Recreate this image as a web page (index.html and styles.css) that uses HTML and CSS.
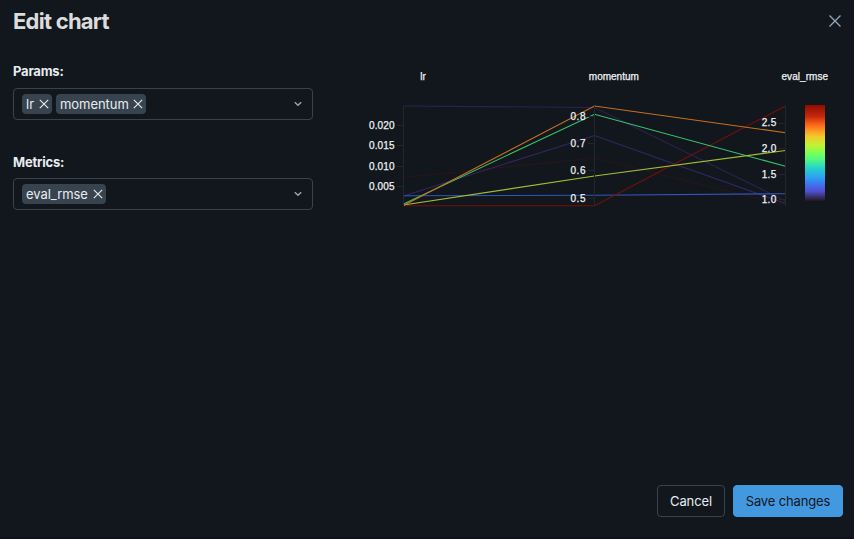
FILE: index.html
```html
<!DOCTYPE html>
<html lang="en">
<head>
<meta charset="utf-8">
<title>Edit chart</title>
<link rel="stylesheet" href="styles.css">
</head>
<body>
<div class="modal">
  <header class="header">
    <h1 class="title">Edit chart</h1>
    <svg class="close" viewBox="0 0 14 14"><path d="M1.5 1.5l11 11M12.5 1.5l-11 11"/></svg>
  </header>
  <main class="content">
    <form class="fields">
      <div class="field">
        <div class="label params-label">Params:</div>
        <div class="select">
          <span class="tag tag-lr"><span>lr</span><svg class="remove" viewBox="0 0 10 10"><path d="M.8.8l8.4 8.4M9.2.8L.8 9.2"/></svg></span>
          <span class="tag tag-momentum"><span>momentum</span><svg class="remove" viewBox="0 0 10 10"><path d="M.8.8l8.4 8.4M9.2.8L.8 9.2"/></svg></span>
          <svg class="chevron" viewBox="0 0 8 6"><path d="M.8 1.2L4 4.3l3.200-3.100"/></svg>
        </div>
      </div>
      <div class="field">
        <div class="label metrics-label">Metrics:</div>
        <div class="select">
          <span class="tag tag-rmse"><span>eval_rmse</span><svg class="remove" viewBox="0 0 10 10"><path d="M.8.8l8.4 8.4M9.2.8L.8 9.2"/></svg></span>
          <svg class="chevron" viewBox="0 0 8 6"><path d="M.8 1.2L4 4.3l3.200-3.100"/></svg>
        </div>
      </div>
    </form>
    <svg class="chart" viewBox="350 60 504 160">
      <defs>
        <linearGradient id="turbo" x1="0" y1="1" x2="0" y2="0">
          <stop offset="0" stop-color="#23171b"/>
          <stop offset=".05" stop-color="#3c3276"/>
          <stop offset=".1" stop-color="#4a52cc"/>
          <stop offset=".14" stop-color="#4860e6"/>
          <stop offset=".24" stop-color="#2f9df5"/>
          <stop offset=".34" stop-color="#26d0cd"/>
          <stop offset=".43" stop-color="#4df884"/>
          <stop offset=".5" stop-color="#7dff56"/>
          <stop offset=".58" stop-color="#c1f334"/>
          <stop offset=".67" stop-color="#f1cb2c"/>
          <stop offset=".73" stop-color="#ff9b21"/>
          <stop offset=".8" stop-color="#fb6218"/>
          <stop offset=".88" stop-color="#c4290c"/>
          <stop offset="1" stop-color="#900c00"/>
        </linearGradient>
      </defs>
      <g class="lines">
        <path stroke="#2b1518" d="M403.500 177.500L594.500 158L785.500 205.500"/>
        <path stroke="#2e2150" d="M403.500 106L594.500 107.500L785.500 201"/>
        <path stroke="#35265f" d="M403.500 196L594.500 135.500L785.500 203.500"/>
        <path stroke="#3454b8" d="M403.500 195.700L594.500 195.300L785.500 193.700"/>
        <path stroke="#751009" d="M403.500 205.800H594.500L785.500 106"/>
        <path stroke="#3bc46d" d="M403.500 204L594.500 114.300L785.500 166.300"/>
        <path stroke="#a5bd35" d="M403.500 205L594.500 176L785.500 150.500"/>
        <path stroke="#ca701c" d="M403.500 205.500L594.500 106L785.500 132.700"/>
      </g>
      <path class="axes" d="M403.500 105.500V206M397 125.500h6M397 145.500h6M397 166.500h6M397 186.500h6M594.500 106V206M588 116.500h6M588 143.500h6M588 170.500h6M588 198.500h6M785.500 106V206M779 123.500h6M779 148.500h6M779 174.500h6M779 199.500h6"/>
      <g class="ticks">
        <text x="369" y="129.300" textLength="25.500">0.020</text>
        <text x="369" y="149.300" textLength="25.500">0.015</text>
        <text x="369" y="169.500" textLength="25.500">0.010</text>
        <text x="369" y="190.300" textLength="25.500">0.005</text>
        <text x="570.500" y="120.300" textLength="15">0.8</text>
        <text x="570.500" y="147.300" textLength="15">0.7</text>
        <text x="570.500" y="174.300" textLength="15">0.6</text>
        <text x="570.500" y="202.300" textLength="15">0.5</text>
        <text x="761.700" y="126.300" textLength="14.500">2.5</text>
        <text x="761.700" y="152.300" textLength="14.500">2.0</text>
        <text x="761.700" y="178.300" textLength="14.500">1.5</text>
        <text x="761.700" y="203.300" textLength="14.500">1.0</text>
      </g>
      <g class="names">
        <text x="420.200" y="80">lr</text>
        <text x="588.800" y="80" textLength="50">momentum</text>
        <text x="781.500" y="80" textLength="46.500">eval_rmse</text>
      </g>
      <rect x="805" y="105" width="20" height="96" fill="url(#turbo)"/>
    </svg>
  </main>
  <footer class="footer">
    <button class="button cancel">Cancel</button>
    <button class="button save">Save changes</button>
  </footer>
</div>
</body>
</html>
```
FILE: styles.css
```css
* { box-sizing: border-box; }
body {
  margin: 0;
  background: #11171d;
  color: #e8ecf0;
  font: 13px/20px Inter, "Liberation Sans", sans-serif;
}
.modal {
  display: flex;
  flex-direction: column;
  width: 854px;
  height: 539px;
  padding-bottom: 20px;
  border-bottom: 2px solid #0d1116;
}
.header {
  display: flex;
  justify-content: space-between;
  height: 60px;
  padding: 7px 12px 0 13px;
}
.title {
  margin: 0;
  color: #dcdcdc;
  font-size: 22px;
  line-height: 28px;
  font-weight: 650;
  letter-spacing: -0.75px;
}
.close {
  width: 14px;
  height: 14px;
  margin-top: 7px;
  fill: none;
  stroke: #92a4b3;
  stroke-width: 1.4;
}
.content {
  display: grid;
  grid-template-columns: 300px 504px;
  column-gap: 37px;
  padding-left: 13px;
  flex: 1;
  align-items: start;
}
.fields { display: grid; gap: 32px; padding-top: 2px; }
.field { height: 58px; }
.label { height: 26px; font-weight: 700; }
.params-label { line-height: 19px; letter-spacing: -0.2px; }
.metrics-label { letter-spacing: -0.2px; }
.select {
  display: flex;
  align-items: center;
  gap: 4px;
  height: 32px;
  padding: 0 10px 0 8px;
  border: 1px solid #37444f;
  border-radius: 4px;
}
.tag {
  display: flex;
  align-items: center;
  justify-content: space-between;
  height: 20px;
  padding: 0 3px 0 4px;
  border-radius: 4px;
  background: #37444f;
  white-space: nowrap;
}
.tag-lr { width: 30px; }
.tag-momentum { width: 90px; letter-spacing: -0.05px; }
.tag-rmse { width: 84px; letter-spacing: -0.05px; }
.remove {
  width: 10px;
  height: 10px;
  flex: none;
  fill: none;
  stroke: #e8ecf0;
  stroke-width: 1.1;
}
.chevron {
  width: 8px;
  height: 6px;
  margin-left: auto;
  fill: none;
  stroke: #92a4b3;
  stroke-width: 1.5;
}
.chart { width: 504px; height: 160px; }
.lines { fill: none; stroke-width: 1.1; }
.axes { fill: none; stroke: #24272a; }
.ticks, .names {
  fill: #f0f2f4;
  font: 10px "Liberation Sans", sans-serif;
  stroke: #f0f2f4;
  stroke-width: 0.25;
}
.footer {
  display: flex;
  justify-content: flex-end;
  gap: 8px;
  padding-right: 11px;
}
.button {
  height: 32px;
  padding: 0;
  border: 1px solid #37444f;
  border-radius: 4px;
  background: transparent;
  color: #e8ecf0;
  font: 13px/20px Inter, "Liberation Sans", sans-serif;
  letter-spacing: -0.14px;
}
.cancel { width: 68px; }
.save {
  width: 110px;
  border-color: #4299e0;
  background: #4299e0;
  color: #11171d;
}
```
